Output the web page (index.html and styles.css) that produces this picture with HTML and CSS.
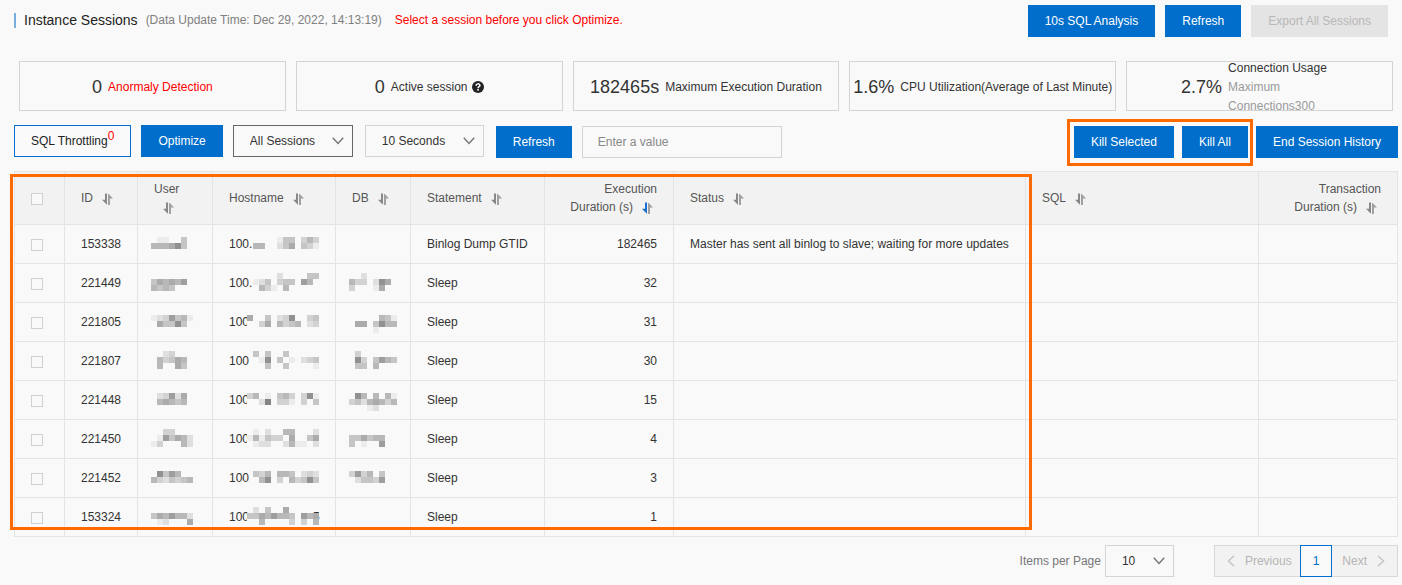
FILE: index.html
```html
<!DOCTYPE html>
<html lang="en">
<head>
<meta charset="utf-8">
<title>Instance Sessions</title>
<link rel="stylesheet" href="styles.css">
</head>
<body>
<svg class="defs" aria-hidden="true">
  <symbol id="sort" viewBox="0 0 11 12">
    <path class="down" d="M3 0.5H5V11.5H4.6L0 6.8H3Z"/>
    <path class="up" d="M6 1H6.8L11 5.6H8V12H6Z"/>
  </symbol>
  <symbol id="chevron" viewBox="0 0 12 8"><path d="M0.8 0.8L6 6.4L11.2 0.8" fill="none" stroke="currentColor" stroke-width="1.5"/></symbol>
  <symbol id="left" viewBox="0 0 8 12"><path d="M7 0.8L1.5 6L7 11.2" fill="none" stroke="currentColor" stroke-width="1.6"/></symbol>
  <symbol id="right" viewBox="0 0 8 12"><path d="M1 0.8L6.5 6L1 11.2" fill="none" stroke="currentColor" stroke-width="1.6"/></symbol>
</svg>

<header class="page-head">
  <h1>Instance Sessions</h1>
  <span class="updated">(Data Update Time: Dec 29, 2022, 14:13:19)</span>
  <span class="hint">Select a session before you click Optimize.</span>
  <div class="head-actions">
    <button class="btn primary" type="button">10s SQL Analysis</button>
    <button class="btn primary" type="button">Refresh</button>
    <button class="btn" type="button" disabled>Export All Sessions</button>
  </div>
</header>

<section class="cards">
  <div class="card"><strong>0</strong><span class="alert">Anormaly Detection</span></div>
  <div class="card"><strong>0</strong><span>Active session</span>
    <svg class="help" viewBox="0 0 12 12"><circle cx="6" cy="6" r="6" fill="#222"/><path d="M4.1 4.7C4.1 2.3 7.9 2.3 7.9 4.5C7.9 5.8 6 5.7 6 7.2" fill="none" stroke="#fff" stroke-width="1.5"/><rect x="5.2" y="8" width="1.6" height="1.6" fill="#fff"/></svg>
  </div>
  <div class="card"><strong>182465s</strong><span>Maximum Execution Duration</span></div>
  <div class="card"><strong>1.6%</strong><span>CPU Utilization(Average of Last Minute)</span></div>
  <div class="card"><strong>2.7%</strong><span class="usage">Connection Usage <em>Maximum Connections300</em></span></div>
</section>

<div class="toolbar">
  <div class="filters">
    <button class="btn outline" type="button">SQL Throttling<sup>0</sup></button>
    <button class="btn primary" type="button">Optimize</button>
    <div class="select active"><select aria-label="Session type"><option>All Sessions</option></select><svg><use href="#chevron"/></svg></div>
    <div class="select interval"><select aria-label="Refresh interval"><option>10 Seconds</option></select><svg><use href="#chevron"/></svg></div>
  </div>
  <div class="search">
    <button class="btn primary" type="button">Refresh</button>
    <input class="field" type="text" placeholder="Enter a value" aria-label="Search value">
  </div>
  <div class="kill">
    <button class="btn primary" type="button">Kill Selected</button>
    <button class="btn primary" type="button">Kill All</button>
  </div>
  <button class="btn primary" type="button">End Session History</button>
</div>

<main class="table-wrap">
  <table>
    <colgroup><col class="c-check"><col class="c-id"><col class="c-user"><col class="c-host"><col class="c-db"><col class="c-stmt"><col class="c-exec"><col class="c-status"><col><col class="c-trans"></colgroup>
    <thead>
      <tr>
        <th><input type="checkbox" aria-label="Select all"></th>
        <th>ID<svg class="sort"><use href="#sort"/></svg></th>
        <th>User<svg class="sort"><use href="#sort"/></svg></th>
        <th>Hostname<svg class="sort"><use href="#sort"/></svg></th>
        <th>DB<svg class="sort"><use href="#sort"/></svg></th>
        <th>Statement<svg class="sort"><use href="#sort"/></svg></th>
        <th class="num">Execution Duration (s)<svg class="sort sorted"><use href="#sort"/></svg></th>
        <th>Status<svg class="sort"><use href="#sort"/></svg></th>
        <th>SQL<svg class="sort"><use href="#sort"/></svg></th>
        <th class="num">Transaction Duration (s)<svg class="sort"><use href="#sort"/></svg></th>
      </tr>
    </thead>
    <tbody id="sessions"></tbody>
  </table>
</main>

<footer class="pager">
  <label for="size">Items per Page</label>
  <div class="select size"><select id="size"><option>10</option></select><svg><use href="#chevron"/></svg></div>
  <nav class="pages">
    <button type="button" disabled><svg><use href="#left"/></svg>Previous</button>
    <button class="current" type="button">1</button>
    <button type="button" disabled>Next<svg><use href="#right"/></svg></button>
  </nav>
</footer>
<script src="sessions.js"></script>
</body>
</html>
```

FILE: styles.css
```css
*, *::before, *::after { box-sizing: border-box; }
body {
  margin: 0;
  padding: 5px 4px 8px 14px;
  background: #f9f9f9;
  color: #333;
  font: 12px/18px "Liberation Sans", Arial, sans-serif;
}
button, input, select { font: inherit; color: inherit; margin: 0; }
.defs { position: absolute; width: 0; height: 0; }

.btn {
  height: 32px;
  padding: 0 16px;
  border: 1px solid transparent;
  border-radius: 0;
  white-space: nowrap;
}
.btn.primary { background: #006eca; color: #fff; }
.btn.outline { border-color: #006eca; background: #fafafa; color: #222; }
.btn:disabled { background: #e4e4e4; color: #b8b8b8; }
.btn sup { color: #f00; line-height: 0; font-size: 12px; }

.page-head { display: flex; align-items: center; padding-right: 10px; }
.page-head h1 {
  margin: 0 0 2px;
  padding-left: 8px;
  border-left: 2px solid #78aedf;
  font-size: 14px;
  line-height: 15px;
  font-weight: 400;
  color: #222;
}
.page-head span { margin-bottom: 2px; }
.updated { margin-left: 8px; color: #808080; }
.hint { margin-left: 13px; color: #f00; }
.head-actions { display: flex; gap: 10px; margin-left: auto; }

.cards {
  display: grid;
  grid-template-columns: repeat(5, minmax(0, 1fr));
  gap: 10px;
  margin: 24px 5px 14px;
}
.card {
  display: flex;
  align-items: center;
  justify-content: center;
  gap: 6px;
  height: 50px;
  padding-top: 2px;
  border: 1px solid #d4d4d4;
  white-space: nowrap;
}
.card strong { font-size: 18px; font-weight: 400; }
.card .alert { color: #f00; }
.card .usage { width: 110px; line-height: 19px; white-space: normal; }
.usage em { display: block; font-style: normal; color: #999; }
.help { width: 12px; height: 12px; margin-left: -2px; }

.toolbar { display: flex; align-items: flex-end; gap: 8px; }
.filters { display: flex; gap: 10px; padding-bottom: 1px; }
.search { display: flex; gap: 10px; margin: 0 auto 0 4px; }
.field {
  width: 200px;
  height: 32px;
  padding: 0 15px;
  border: 1px solid #d4d4d4;
  background: transparent;
}
.field::placeholder { color: #888; }
.kill { position: relative; display: flex; gap: 8px; }
.kill::after {
  content: "";
  position: absolute;
  inset: -7px -5px -8px -7px;
  border: 3px solid #ff6a00;
  pointer-events: none;
}

.select { position: relative; width: 120px; height: 32px; }
.interval { margin-left: 2px; width: 119px; }
.select select {
  width: 100%;
  height: 100%;
  padding: 0 16px;
  border: 1px solid #d4d4d4;
  border-radius: 0;
  background: transparent;
  appearance: none;
}
.select.active select { border-color: #666; }
.select svg {
  position: absolute;
  right: 9px;
  top: 12px;
  width: 12px;
  height: 8px;
  color: #777;
  pointer-events: none;
}

.table-wrap { position: relative; margin-top: 13px; }
.table-wrap::after {
  content: "";
  position: absolute;
  top: 3px;
  bottom: 7px;
  left: -4px;
  width: 1022px;
  border: 3px solid #ff6a00;
  pointer-events: none;
}
table { width: 100%; border-collapse: collapse; table-layout: fixed; }
.c-check { width: 50px; }
.c-id { width: 73px; }
.c-user, .c-db { width: 75px; }
.c-host { width: 123px; }
.c-stmt { width: 134px; }
.c-exec { width: 129px; }
.c-status { width: 352px; }
.c-trans { width: 139px; }
th, td {
  padding: 0 16px;
  border: 1px solid #e4e4e4;
  text-align: left;
  font-weight: 400;
  white-space: nowrap;
}
th { height: 53px; background: #f2f2f2; color: #555; white-space: normal; }
td { height: 39px; }
.num { text-align: right; }
.sort { width: 11px; height: 12px; margin: 0 4px 0 9px; vertical-align: -3px; color: #888; }
.sort.sorted { color: #1a6fd0; }
.down { fill: currentColor; }
.up { fill: #a0a0a0; }
input[type="checkbox"] {
  display: block;
  width: 12px;
  height: 12px;
  margin-top: 2px;
  border: 1px solid #d0d0d0;
  background: #f9f9f9;
  appearance: none;
}
.masked { padding: 0 0 0 13px; }
.mosaic { display: block; height: 24px; }
.host { display: grid; align-items: center; }
.host > * { grid-area: 1 / 1; }
.host .mosaic { margin-left: 18px; }
.host .tail { margin-left: 84px; }

.pager { display: flex; align-items: center; margin-top: 8px; color: #777; }
.pager label { margin-left: auto; }
.size { width: 69px; margin-left: 4px; color: #333; }
.pages { display: flex; margin-left: 40px; }
.pages button {
  display: flex;
  align-items: center;
  gap: 10px;
  height: 32px;
  padding: 0 8px 0 12px;
  border: 1px solid #d8d8d8;
  border-right: 0;
  background: #f2f2f2;
  color: #b5b5b5;
}
.pages button:last-child { border: 1px solid #d8d8d8; border-left: 0; padding: 0 12px 0 10px; }
.pages .current { border: 1px solid #006eca; background: #fafafa; color: #006eca; padding: 0 12px; }
.pages svg { width: 8px; height: 12px; color: #c8c8c8; }
```

FILE: sessions.js
```js
// Masked values are drawn as 6px mosaic cells; each digit is a grey level, "." is clear.
const sessions = [
  { id: 153338, stmt: "Binlog Dump GTID", time: 182465, status: "Master has sent all binlog to slave; waiting for more updates",
    user: [".11..4.", "555684."], host: [".....144.353", ".55..246.431"] },
  { id: 221449, stmt: "Sleep", time: 32,
    user: [".......", "465657.", "5454..."],
    host: [".....2....44", ".124.344.75.", "..531.5....."],
    db: ["..2.....", "533.286.", "3...16.."] },
  { id: 221805, stmt: "Sleep", time: 31,
    user: ["1237451", ".64484."], host: ["6..4.238..34", "0.36.5345.23"],
    db: [".....541", ".66.4855", "....1..."] },
  { id: 221807, stmt: "Sleep", time: 30,
    user: ["..23...", ".53465.", ".5..64."],
    host: [".4.4..4.....", "..18.4.1.234", "...4..4....1"],
    db: [".3......", ".83.4754", ".44.5..."] },
  { id: 221448, stmt: "Sleep", time: 15,
    user: [".23726.", ".56545."], host: ["35.1.453.381", "0.29.331.3.4"],
    db: [".85.5.51", "34256535", "...12..."] },
  { id: 221450, stmt: "Sleep", time: 4,
    user: ["..33...", ".174652", "13...52"],
    host: ["01.2..55...2", "151433.6..46", "0122..2511.2"],
    db: ["........", "446455..", "4.1..7.."] },
  { id: 221452, stmt: "Sleep", time: 3,
    user: [".8475..", "5324345"], host: [".435.554.232", "..58.3.53484"],
    db: ["3735.4..", ".24437.."] },
  { id: 153324, stmt: "Sleep", time: 1, tail: "5",
    user: [".......", "4657552", ".12...6"],
    host: [".2.4..6.....", "44657554.756", "0.5....3.3.5"] }
];

function mosaic(lines, row) {
  if (!lines) return "";
  const top = row % 2 ? 2 : 5;
  const width = lines[0].length * 6;
  let cells = "";
  lines.forEach((line, y) => [...line].forEach((level, x) => {
    if (level === ".") return;
    const grey = 249 - level * 13;
    cells += `<rect x="${x * 6}" y="${top + y * 6}" width="6" height="6" fill="rgb(${grey},${grey},${grey})"/>`;
  }));
  return `<svg class="mosaic" width="${width}" viewBox="0 0 ${width} 24" shape-rendering="crispEdges">${cells}</svg>`;
}

document.getElementById("sessions").innerHTML = sessions.map((s, i) => `<tr>
  <td><input type="checkbox" aria-label="Select session ${s.id}"></td>
  <td>${s.id}</td>
  <td class="masked">${mosaic(s.user, i)}</td>
  <td><div class="host"><span>100${i < 2 ? "." : ""}</span>${s.tail ? `<span class="tail">${s.tail}</span>` : ""}${mosaic(s.host, i)}</div></td>
  <td class="masked">${mosaic(s.db, i)}</td>
  <td>${s.stmt}</td>
  <td class="num">${s.time}</td>
  <td>${s.status || ""}</td>
  <td></td>
  <td></td>
</tr>`).join("");
```
